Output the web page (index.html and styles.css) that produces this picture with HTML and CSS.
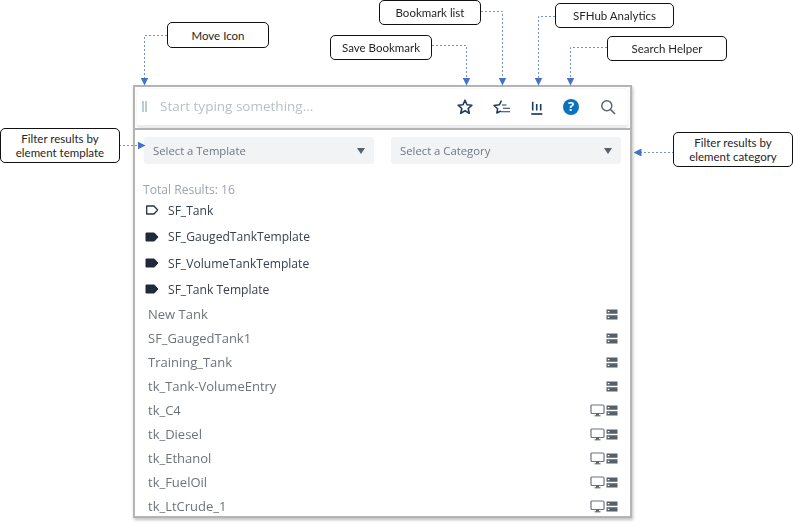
FILE: index.html
```html
<!DOCTYPE html>
<html lang="en">
<head>
<meta charset="utf-8">
<title>SFHub search</title>
<link rel="stylesheet" href="styles.css">
</head>
<body>
<main class="canvas">
  <svg class="wires" width="793" height="526" viewBox="0 0 793 526" aria-hidden="true">
    <defs>
      <marker id="arrow" viewBox="0 0 8 8" refX="7.5" refY="4" markerWidth="8" markerHeight="8" markerUnits="userSpaceOnUse" orient="auto">
        <path d="M0 0L8 4L0 8Z" fill="#4472c4"/>
      </marker>
    </defs>
    <g fill="none" stroke="#6f93d6" stroke-width="1" stroke-dasharray="2 2" marker-end="url(#arrow)">
      <path d="M167 35.500H144.500V85"/>
      <path d="M432 45.500H466.500V85"/>
      <path d="M481 11.500H502.500V85"/>
      <path d="M555 16.500H538.500V85"/>
      <path d="M607 47.500H570.500V85"/>
      <path d="M119 145.500H145"/>
      <path d="M674 152.500H634"/>
    </g>
  </svg>

  <div class="note note-move">Move Icon</div>
  <div class="note note-save">Save Bookmark</div>
  <div class="note note-list">Bookmark list</div>
  <div class="note note-hub">SFHub Analytics</div>
  <div class="note note-help">Search Helper</div>
  <div class="note note-tpl">Filter results by<br>element template</div>
  <div class="note note-cat">Filter results by<br>element category</div>

  <section class="panel">
    <div class="search">
      <span class="grip"></span>
      <span class="placeholder">Start typing something...</span>
      <div class="tools">
        <svg class="tool" width="18" height="18" viewBox="0 0 18 18"><path d="M9 2.200L11 6.700L15.900 7.200L12.200 10.500L13.300 15.300L9 12.800L4.700 15.300L5.800 10.500L2.100 7.200L7 6.700Z" fill="none" stroke="#1f3a5f" stroke-width="1.600" stroke-linejoin="round"/></svg>
        <svg class="tool" width="18" height="18" viewBox="0 0 18 18"><path d="M9.500 2.500L7.300 6.800L2 7.500L5.600 10.800L4.800 15L8.800 13" fill="none" stroke="#1f3a5f" stroke-width="1.500" stroke-linejoin="round"/><path d="M10 7H14.500M11 10.300H18M9 13.700H18" stroke="#1f3a5f" stroke-width="1.100" fill="none"/></svg>
        <svg class="tool" width="18" height="18" viewBox="0 0 18 18"><path d="M4.700 3.700V12.500M8.700 6V12.500M12.700 6V12.500" stroke="#1f3a5f" stroke-width="1.600" fill="none"/><path d="M3.300 16H14.300" stroke="#1f3a5f" stroke-width="1.700" fill="none"/></svg>
        <svg class="tool tool-help" width="18" height="18" viewBox="0 0 18 18"><circle cx="9" cy="9" r="8" fill="#0b72bd"/><text x="9" y="13.300" class="qmark">?</text></svg>
        <svg class="tool tool-find" width="18" height="18" viewBox="0 0 18 18"><circle cx="7.800" cy="7.800" r="5" fill="none" stroke="#5b6570" stroke-width="1.500"/><path d="M11.500 11.500L16 16" stroke="#5b6570" stroke-width="1.700" fill="none"/></svg>
      </div>
    </div>

    <div class="filters">
      <div class="select"><span>Select a Template</span><i class="caret"></i></div>
      <div class="select"><span>Select a Category</span><i class="caret"></i></div>
    </div>

    <div class="total">Total Results: 16</div>

    <ul class="templates">
      <li><svg width="14" height="10" viewBox="0 0 14 10"><path d="M1.700 1H9L12.600 5L9 9H1.700Z" fill="none" stroke="#2a3441" stroke-width="1.300" stroke-linejoin="round"/></svg>SF_Tank</li>
      <li><svg width="14" height="10" viewBox="0 0 14 10"><path d="M1 1H9.300L13 5L9.300 9H1Z" fill="#1f2a3a" stroke="#1f2a3a" stroke-linejoin="round"/></svg>SF_GaugedTankTemplate</li>
      <li><svg width="14" height="10" viewBox="0 0 14 10"><path d="M1 1H9.300L13 5L9.300 9H1Z" fill="#1f2a3a" stroke="#1f2a3a" stroke-linejoin="round"/></svg>SF_VolumeTankTemplate</li>
      <li><svg width="14" height="10" viewBox="0 0 14 10"><path d="M1 1H9.300L13 5L9.300 9H1Z" fill="#1f2a3a" stroke="#1f2a3a" stroke-linejoin="round"/></svg>SF_Tank Template</li>
    </ul>

    <ul class="results">
      <li><span>New Tank</span><span class="badges"><svg class="srv" width="12" height="11" viewBox="0 0 12 11"><use href="#server"/></svg></span></li>
      <li><span>SF_GaugedTank1</span><span class="badges"><svg class="srv" width="12" height="11" viewBox="0 0 12 11"><use href="#server"/></svg></span></li>
      <li><span>Training_Tank</span><span class="badges"><svg class="srv" width="12" height="11" viewBox="0 0 12 11"><use href="#server"/></svg></span></li>
      <li><span>tk_Tank-VolumeEntry</span><span class="badges"><svg class="srv" width="12" height="11" viewBox="0 0 12 11"><use href="#server"/></svg></span></li>
      <li><span>tk_C4</span><span class="badges"><svg class="mon" width="15" height="13" viewBox="0 0 15 13"><use href="#monitor"/></svg><svg class="srv" width="12" height="11" viewBox="0 0 12 11"><use href="#server"/></svg></span></li>
      <li><span>tk_Diesel</span><span class="badges"><svg class="mon" width="15" height="13" viewBox="0 0 15 13"><use href="#monitor"/></svg><svg class="srv" width="12" height="11" viewBox="0 0 12 11"><use href="#server"/></svg></span></li>
      <li><span>tk_Ethanol</span><span class="badges"><svg class="mon" width="15" height="13" viewBox="0 0 15 13"><use href="#monitor"/></svg><svg class="srv" width="12" height="11" viewBox="0 0 12 11"><use href="#server"/></svg></span></li>
      <li><span>tk_FuelOil</span><span class="badges"><svg class="mon" width="15" height="13" viewBox="0 0 15 13"><use href="#monitor"/></svg><svg class="srv" width="12" height="11" viewBox="0 0 12 11"><use href="#server"/></svg></span></li>
      <li><span>tk_LtCrude_1</span><span class="badges"><svg class="mon" width="15" height="13" viewBox="0 0 15 13"><use href="#monitor"/></svg><svg class="srv" width="12" height="11" viewBox="0 0 12 11"><use href="#server"/></svg></span></li>
    </ul>
  </section>

  <svg class="defs" width="0" height="0" aria-hidden="true">
    <symbol id="server" viewBox="0 0 12 11">
      <path d="M0.500 0.500H11.500V4.800H0.500ZM0.500 6.200H11.500V10.500H0.500Z" fill="#56606c"/>
      <path d="M1.800 2H3.400V3.200H1.800ZM1.800 7.700H3.400V8.900H1.800Z" fill="#fff"/>
    </symbol>
    <symbol id="monitor" viewBox="0 0 15 13">
      <rect x="1" y="1" width="13" height="8.500" rx="1" fill="none" stroke="#6b7480" stroke-width="1.200"/>
      <path d="M6 9.500H9V11.500H6Z" fill="#56606c"/>
      <path d="M4.500 11.800H10.500" stroke="#56606c" stroke-width="1.100"/>
    </symbol>
  </svg>
</main>
</body>
</html>
```

FILE: styles.css
```css
* { box-sizing: border-box; }

html, body {
  margin: 0;
  padding: 0;
  background: #fff;
}

body {
  font-family: "Open Sans", "Liberation Sans", sans-serif;
  overflow: hidden;
}

ul { list-style: none; margin: 0; padding: 0; }

.canvas {
  position: relative;
  width: 793px;
  height: 526px;
  overflow: hidden;
  filter: blur(.35px);
}

.wires { position: absolute; left: 0; top: 0; z-index: 2; }
.defs { position: absolute; }

.note {
  position: absolute;
  display: flex;
  align-items: center;
  justify-content: center;
  text-align: center;
  padding-top: 1px;
  border: 1.500px solid #111;
  border-radius: 5px;
  background: #fff;
  color: #262626;
  font-family: Lato, "Liberation Sans", sans-serif;
  font-size: 11.500px;
  line-height: 14px;
  z-index: 3;
}

.note-move { left: 167px; top: 22px; width: 102px; height: 26px; }
.note-save { left: 330px; top: 35px; width: 102px; height: 25px; }
.note-list { left: 379px; top: 0; width: 102px; height: 25px; }
.note-hub  { left: 555px; top: 3px; width: 119px; height: 25px; }
.note-help { left: 607px; top: 36px; width: 120px; height: 25px; }
.note-tpl  { left: 0; top: 128px; width: 120px; height: 35px; }
.note-cat  { left: 673px; top: 132px; width: 120px; height: 35px; }

.panel {
  position: absolute;
  left: 133px;
  top: 85px;
  width: 499px;
  height: 433px;
  display: flex;
  flex-direction: column;
  border: 2px solid #b4b4b4;
  background: #fff;
  box-shadow: 1px 2px 3px rgba(0, 0, 0, .25);
}

.search {
  display: flex;
  align-items: center;
  height: 39px;
  margin: 2px 2px 0 2px;
  padding: 0 11px 3px 3px;
  flex: none;
  border-radius: 4px;
  background: #fff;
  border-bottom: 3px solid #ececec;
  box-shadow: 0 0 2px rgba(0, 0, 0, .12);
}

.grip {
  width: 5px;
  height: 11px;
  margin: 2px 0 0 2px;
  border-left: 2px solid #b9cdd6;
  border-right: 2px solid #b9cdd6;
  flex: none;
}

.placeholder {
  margin-left: 13px;
  color: #b9bfc7;
  font-size: 13.500px;
  flex: 1;
}

.tools {
  display: flex;
  align-items: center;
  gap: 18px;
  margin-top: 3px;
}

.tool { display: block; flex: none; }
.tool-help { margin-left: -2px; }
.tool-find { margin-left: 1px; }

.qmark {
  fill: #fff;
  font-family: "Open Sans", sans-serif;
  font-size: 13px;
  font-weight: 700;
  text-anchor: middle;
}

.filters {
  display: flex;
  gap: 17px;
  padding: 7px 9px 0;
  border-top: 2px solid #b4b4b4;
  flex: none;
}

.select {
  flex: 1;
  height: 27px;
  display: flex;
  align-items: center;
  justify-content: space-between;
  padding: 0 9px;
  border-radius: 3px;
  background: #f1f3f5;
  color: #6e7884;
  font-size: 11.300px;
}

.caret {
  width: 0;
  height: 0;
  border-left: 4.500px solid transparent;
  border-right: 4.500px solid transparent;
  border-top: 6px solid #56606c;
}

.total {
  margin: 17px 0 0 8px;
  height: 16px;
  color: #9aa5b1;
  font-size: 12.100px;
  line-height: 17px;
  flex: none;
}

.templates li {
  display: flex;
  align-items: center;
  gap: 9px;
  height: 26.500px;
  padding-left: 10px;
  color: #39424e;
  font-size: 12.100px;
}

.templates li:last-child { height: 25.500px; }

.templates svg { flex: none; }

.results {
  display: flex;
  flex-direction: column;
}

.results li {
  display: flex;
  align-items: center;
  justify-content: space-between;
  height: 24px;
  padding: 0 12px 0 13px;
  color: #6d7379;
  font-size: 13px;
}

.badges {
  display: flex;
  align-items: center;
  gap: 1px;
}

.badges svg { display: block; }
```
